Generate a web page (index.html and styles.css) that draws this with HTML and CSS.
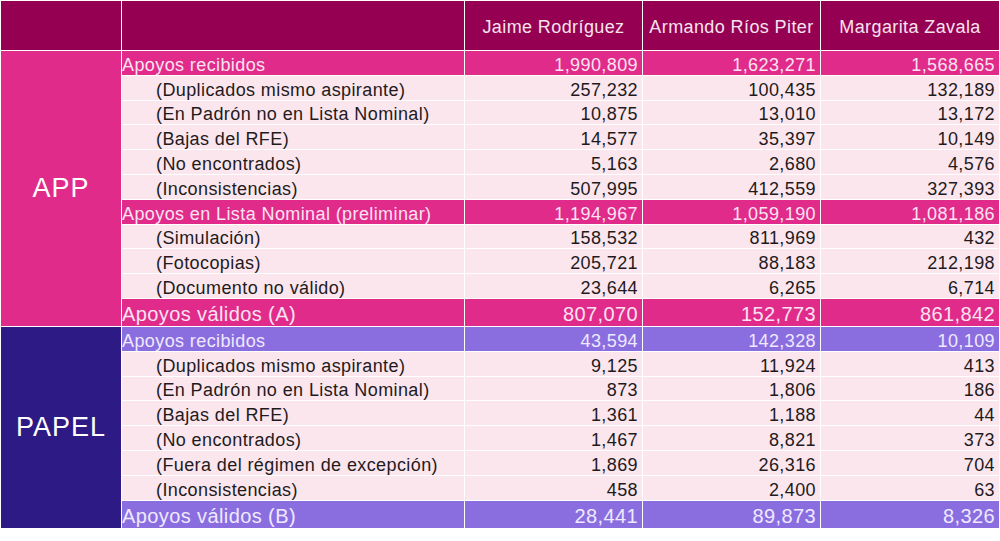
FILE: index.html
```html
<!DOCTYPE html>
<html lang="es">
<head>
<meta charset="utf-8">
<title>Apoyos</title>
<link rel="stylesheet" href="styles.css">
</head>
<body>
<table class="tbl">
  <colgroup>
    <col class="c-sec"><col class="c-lab"><col class="c-num"><col class="c-num"><col class="c-num5">
  </colgroup>
  <thead>
    <tr class="head">
      <th></th><th></th>
      <th>Jaime Rodríguez</th><th>Armando Ríos Piter</th><th>Margarita Zavala</th>
    </tr>
  </thead>
  <tbody class="app">
    <tr class="sub"><td class="sec" rowspan="11">APP</td><td class="lab">Apoyos recibidos</td><td>1,990,809</td><td>1,623,271</td><td>1,568,665</td></tr>
    <tr class="det"><td class="lab">(Duplicados mismo aspirante)</td><td>257,232</td><td>100,435</td><td>132,189</td></tr>
    <tr class="det"><td class="lab">(En Padrón no en Lista Nominal)</td><td>10,875</td><td>13,010</td><td>13,172</td></tr>
    <tr class="det"><td class="lab">(Bajas del RFE)</td><td>14,577</td><td>35,397</td><td>10,149</td></tr>
    <tr class="det"><td class="lab">(No encontrados)</td><td>5,163</td><td>2,680</td><td>4,576</td></tr>
    <tr class="det"><td class="lab">(Inconsistencias)</td><td>507,995</td><td>412,559</td><td>327,393</td></tr>
    <tr class="sub"><td class="lab">Apoyos en Lista Nominal (preliminar)</td><td>1,194,967</td><td>1,059,190</td><td>1,081,186</td></tr>
    <tr class="det"><td class="lab">(Simulación)</td><td>158,532</td><td>811,969</td><td>432</td></tr>
    <tr class="det"><td class="lab">(Fotocopias)</td><td>205,721</td><td>88,183</td><td>212,198</td></tr>
    <tr class="det"><td class="lab">(Documento no válido)</td><td>23,644</td><td>6,265</td><td>6,714</td></tr>
    <tr class="sub total"><td class="lab">Apoyos válidos (A)</td><td>807,070</td><td>152,773</td><td>861,842</td></tr>
  </tbody>
  <tbody class="papel">
    <tr class="sub"><td class="sec" rowspan="8">PAPEL</td><td class="lab">Apoyos recibidos</td><td>43,594</td><td>142,328</td><td>10,109</td></tr>
    <tr class="det"><td class="lab">(Duplicados mismo aspirante)</td><td>9,125</td><td>11,924</td><td>413</td></tr>
    <tr class="det"><td class="lab">(En Padrón no en Lista Nominal)</td><td>873</td><td>1,806</td><td>186</td></tr>
    <tr class="det"><td class="lab">(Bajas del RFE)</td><td>1,361</td><td>1,188</td><td>44</td></tr>
    <tr class="det"><td class="lab">(No encontrados)</td><td>1,467</td><td>8,821</td><td>373</td></tr>
    <tr class="det"><td class="lab">(Fuera del régimen de excepción)</td><td>1,869</td><td>26,316</td><td>704</td></tr>
    <tr class="det"><td class="lab">(Inconsistencias)</td><td>458</td><td>2,400</td><td>63</td></tr>
    <tr class="sub total"><td class="lab">Apoyos válidos (B)</td><td>28,441</td><td>89,873</td><td>8,326</td></tr>
  </tbody>
</table>
</body>
</html>
```
FILE: styles.css
```css
html, body {
  margin: 0;
  padding: 0;
  background: #ffffff;
}

body {
  font-family: "Liberation Sans", Arial, sans-serif;
  color: #1f1b1d;
}

.tbl {
  width: 1000px;
  table-layout: fixed;
  border-collapse: separate;
  border-spacing: 1px;
  font-size: 18px;
  letter-spacing: 0.4px;
}

.c-sec { width: 120px; }
.c-lab { width: 342px; }
.c-num { width: 177px; }
.c-num5 { width: 178px; }

.tbl th,
.tbl td {
  padding: 0;
  white-space: nowrap;
  overflow: hidden;
}

.head th {
  height: 49px;
  background: #960052;
  color: #f4e4ee;
  font-weight: normal;
  text-align: center;
  vertical-align: middle;
  padding-top: 4px;
  box-sizing: border-box;
}

.tbl tbody tr { height: 23.8px; }
.tbl tbody tr.total { height: 27px; }

.tbl td {
  text-align: right;
  padding-right: 4px;
  line-height: 20px;
  vertical-align: bottom;
}

.tbl td.lab {
  text-align: left;
  padding-right: 0;
}

.det td { background: #fbe6ee; }
.det td.lab { padding-left: 34px; }

.app .sub td { background: #e02b8b; color: #fbe3f1; }
.papel .sub td { background: #8a6ee0; color: #efe9ff; }

.tbl td.sec {
  text-align: center;
  vertical-align: middle;
  font-size: 27px;
  line-height: 32px;
  letter-spacing: 1px;
  color: #ffffff;
  padding-right: 0;
}

.app .sub td.sec { background: #e02b8b; }
.papel .sub td.sec { background: #2d1a85; }

.total td {
  font-size: 20px;
  line-height: 24px;
}
```
